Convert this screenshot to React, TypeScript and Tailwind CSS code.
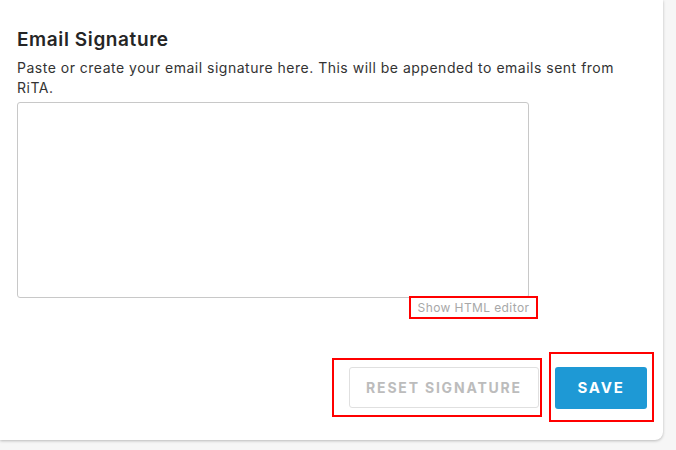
import React from "react";

export default function App() {
  return (
    <div className="w-[676px] h-[450px] bg-[#f6f6f6] overflow-hidden" style={{ fontFamily: "Inter, 'Noto Sans', sans-serif" }}>
      <div className="w-[663px] h-[440px] bg-white rounded-br-[8px] shadow-[0_1px_3px_rgba(0,0,0,0.25)] pl-[17px] pt-[28px] flex flex-col">
        <h2 className="text-[19px] leading-[24px] font-semibold tracking-[0.6px] text-[#252525]">Email Signature</h2>
        <p className="mt-[6px] text-[14px] leading-[20px] tracking-[0.5px] text-[#333] w-[605px]">
          Paste or create your email signature here. This will be appended to emails sent from RiTA.
        </p>
        <div className="mt-[4px] w-[512px] h-[196px] border border-[#c8c8c8] rounded-[3px]"></div>
        <div className="w-[512px] flex justify-end">
          <div className="mt-[-2px] mr-[-9px] w-[129px] h-[23px] border-2 border-[#f00] flex items-center justify-center">
            <span className="text-[12px] tracking-[0.4px] text-[#a8a8a8]">Show HTML editor</span>
          </div>
        </div>
        <div className="mt-[33px] flex items-start pr-[9px] justify-end">
          <div className="mt-[6px] w-[210px] h-[59px] border-2 border-[#f00] flex items-center justify-end pr-[1px]">
            <button className="w-[190px] h-[41px] border border-[#e0e0e0] rounded-[3px] text-[14px] font-bold tracking-[1.8px] text-[#bcbcbc]">
              RESET SIGNATURE
            </button>
          </div>
          <div className="ml-[7px] w-[105px] h-[70px] border-2 border-[#f00] flex items-start justify-start pl-[4px] pt-[13px]">
            <button className="w-[92px] h-[42px] bg-[#1e99d5] rounded-[3px] text-[15px] font-bold tracking-[1.8px] text-white">
              SAVE
            </button>
          </div>
        </div>
      </div>
    </div>
  );
}
